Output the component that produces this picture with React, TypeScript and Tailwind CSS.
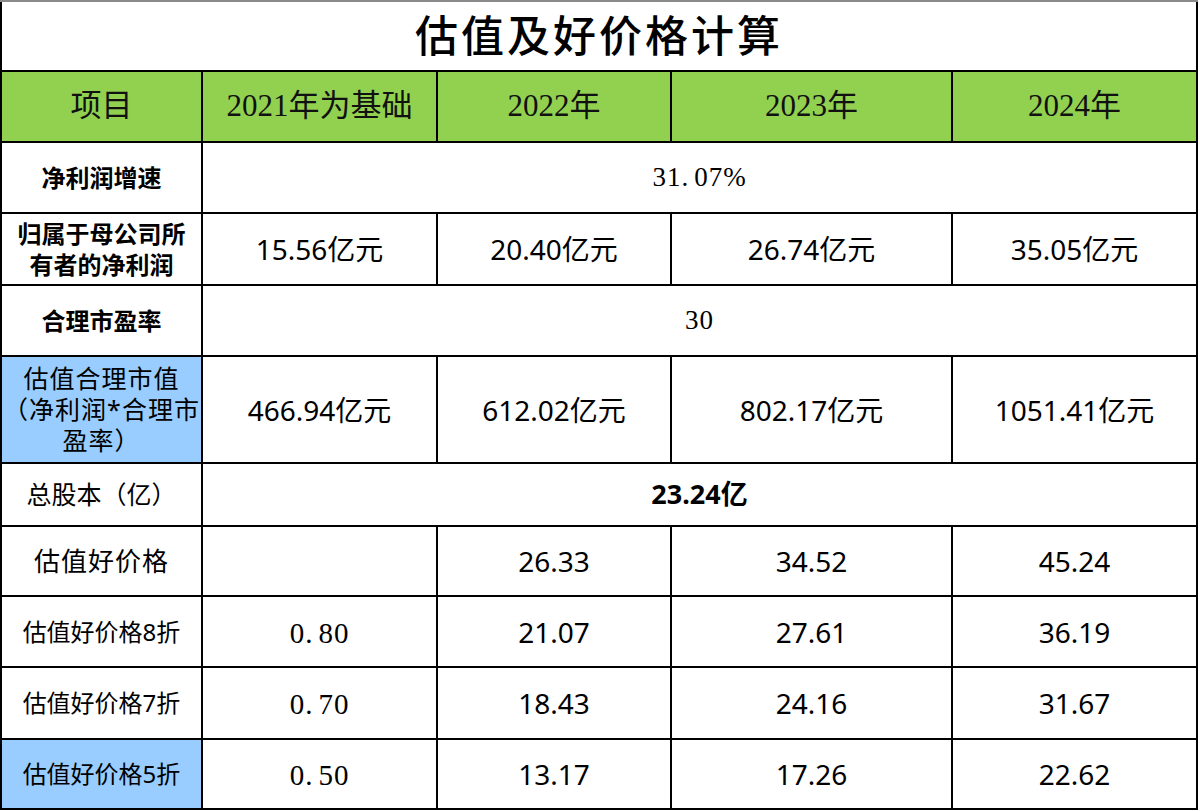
const cjk = '"Noto Sans", "Noto Sans CJK SC", sans-serif'
const serif = '"Liberation Serif", "Noto Sans CJK SC", serif'

type Row = {
  label: string[]
  labelClass?: string
  labelBlue?: boolean
  span?: string
  spanClass?: string
  values?: string[]
}

const rows: Row[] = [
  { label: ['净利润增速'], labelClass: 'font-bold text-[24px]', span: '31.07%', spanClass: 'serif' },
  {
    label: ['归属于母公司所', '有者的净利润'],
    labelClass: 'font-bold text-[24px] leading-[31px]',
    values: ['15.56亿元', '20.40亿元', '26.74亿元', '35.05亿元'],
  },
  { label: ['合理市盈率'], labelClass: 'font-bold text-[24px]', span: '30', spanClass: 'serif' },
  {
    label: ['估值合理市值', '（净利润*合理市', '盈率）'],
    labelClass: 'text-[25px] leading-[31px] tracking-[1px]',
    labelBlue: true,
    values: ['466.94亿元', '612.02亿元', '802.17亿元', '1051.41亿元'],
  },
  { label: ['总股本（亿）'], labelClass: 'text-[25px]', span: '23.24亿', spanClass: 'bold' },
  { label: ['估值好价格'], labelClass: 'text-[26px] tracking-[1px]', values: ['', '26.33', '34.52', '45.24'] },
  { label: ['估值好价格8折'], labelClass: 'text-[24px]', values: ['0.80', '21.07', '27.61', '36.19'] },
  { label: ['估值好价格7折'], labelClass: 'text-[24px]', values: ['0.70', '18.43', '24.16', '31.67'] },
  { label: ['估值好价格5折'], labelClass: 'text-[24px]', labelBlue: true, values: ['0.50', '13.17', '17.26', '22.62'] },
]

function Cell({ children, className = '', bg = 'bg-white' }: { children?: React.ReactNode; className?: string; bg?: string }) {
  return (
    <div className={'flex items-center justify-center text-center text-black ' + bg + ' ' + className}>
      {children}
    </div>
  )
}

// old-style fixed-width numbers leave a gap after the decimal point
function Spaced({ v }: { v: string }) {
  const dot = v.indexOf('.')
  if (dot < 0) return <>{v}</>
  return (
    <>
      {v.slice(0, dot + 1)}
      <span className="ml-[5px]">{v.slice(dot + 1)}</span>
    </>
  )
}

export default function App() {
  return (
    <div className="w-[1200px] h-[811px] bg-white">
      <div className="w-[1198px] border-t-2 border-[#8a8a8a]">
        <div className="grid grid-cols-[199px_233px_232px_279px_243px] grid-rows-[68px_69px_69px_70px_69px_105px_61px_68px_69px_70px_68px] gap-[2px] bg-black px-[2px] pb-[2px]">
          <Cell className="col-span-5 text-[43px] font-medium tracking-[3px]">
            <span style={{ fontFamily: cjk }}>估值及好价格计算</span>
          </Cell>

          {['项目', '2021年为基础', '2022年', '2023年', '2024年'].map((h) => (
            <Cell key={h} bg="bg-[#92d050]">
              <span className="text-[31px] text-[#111]" style={{ fontFamily: serif }}>
                {h}
              </span>
            </Cell>
          ))}

          {rows.map((r, i) => (
            <div key={i} className="contents">
              <Cell bg={r.labelBlue ? 'bg-[#99ccff]' : 'bg-white'}>
                <div className={r.labelClass} style={{ fontFamily: cjk }}>
                  {r.label.map((l) => (
                    <div key={l}>{l}</div>
                  ))}
                </div>
              </Cell>
              {r.span !== undefined ? (
                <Cell className="col-span-4">
                  {r.spanClass === 'serif' ? (
                    <span className="text-[27px] tracking-[1px]" style={{ fontFamily: serif }}>
                      <Spaced v={r.span} />
                    </span>
                  ) : (
                    <span className="text-[27px] font-bold" style={{ fontFamily: cjk }}>
                      {r.span}
                    </span>
                  )}
                </Cell>
              ) : (
                r.values!.map((v, j) =>
                  j === 0 && /^0\.\d0$/.test(v) ? (
                    <Cell key={j}>
                      <span className="text-[29px] tracking-[1px] pt-[4px]" style={{ fontFamily: serif }}>
                        <Spaced v={v} />
                      </span>
                    </Cell>
                  ) : (
                    <Cell key={j}>
                      <span className="text-[28px]" style={{ fontFamily: cjk }}>
                        {v}
                      </span>
                    </Cell>
                  )
                )
              )}
            </div>
          ))}
        </div>
      </div>
    </div>
  )
}
